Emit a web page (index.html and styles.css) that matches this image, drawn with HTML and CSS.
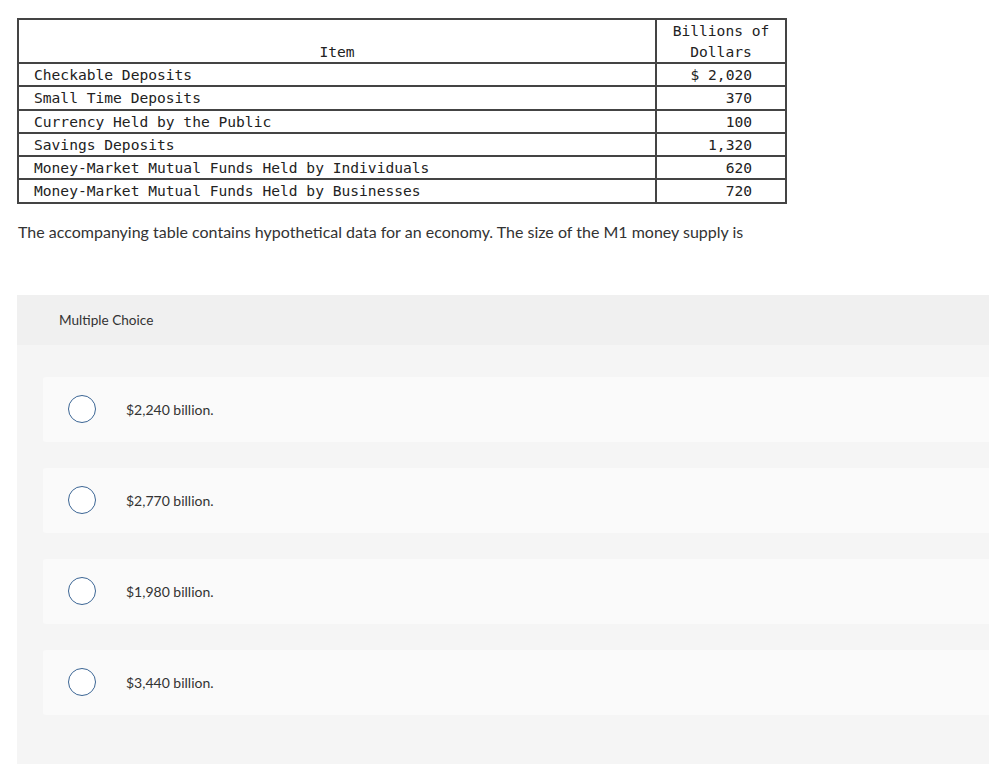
FILE: index.html
```html
<!DOCTYPE html>
<html>
<head>
<meta charset="utf-8">
<link rel="stylesheet" href="styles.css">
</head>
<body>
<div class="page">
  <table class="data">
    <thead>
      <tr>
        <th class="item-h">Item</th>
        <th class="val-h">Billions of<br>Dollars</th>
      </tr>
    </thead>
    <tbody>
      <tr><td class="item">Checkable Deposits</td><td class="val">$ 2,020</td></tr>
      <tr><td class="item">Small Time Deposits</td><td class="val">370</td></tr>
      <tr><td class="item">Currency Held by the Public</td><td class="val">100</td></tr>
      <tr><td class="item">Savings Deposits</td><td class="val">1,320</td></tr>
      <tr><td class="item">Money-Market Mutual Funds Held by Individuals</td><td class="val">620</td></tr>
      <tr><td class="item">Money-Market Mutual Funds Held by Businesses</td><td class="val">720</td></tr>
    </tbody>
  </table>
  <p class="question">The accompanying table contains hypothetical data for an economy. The size of the M1 money supply is</p>
  <section class="mc">
    <div class="mc-head">Multiple Choice</div>
    <div class="mc-list">
      <label class="opt"><span class="radio"></span><span class="opt-text">$2,240 billion.</span></label>
      <label class="opt"><span class="radio"></span><span class="opt-text">$2,770 billion.</span></label>
      <label class="opt"><span class="radio"></span><span class="opt-text">$1,980 billion.</span></label>
      <label class="opt"><span class="radio"></span><span class="opt-text">$3,440 billion.</span></label>
    </div>
  </section>
</div>
</body>
</html>
```

FILE: styles.css
```css
html, body {
  margin: 0;
  padding: 0;
  background: #ffffff;
}
.page {
  padding: 18px 0 0 17px;
}
.data {
  border-collapse: collapse;
  width: 770px;
  border: 2px solid #444444;
  font-family: "DejaVu Sans Mono", "Liberation Mono", monospace;
  font-size: 14.6px;
  color: #222222;
}
.data th, .data td {
  border: 2px solid #444444;
  font-weight: normal;
  line-height: 21px;
  padding: 0;
}
.data td {
  line-height: 21.3px;
}
.data th {
  vertical-align: bottom;
  text-align: center;
  padding-top: 0;
}
.item-h {
  width: 636px;
}
.data td.item {
  padding-left: 15px;
  text-align: left;
}
.data td.val {
  text-align: right;
  padding-right: 33px;
}
.question {
  margin: 18px 0 0 1px;
  font-family: Lato, "Open Sans", sans-serif;
  font-size: 16px;
  color: #333333;
  line-height: 20px;
}
.mc {
  margin-top: 53px;
  background: #f5f5f5;
  padding-bottom: 60px;
}
.mc-head {
  background: #f0f0f0;
  height: 50px;
  display: flex;
  align-items: center;
  padding-left: 42px;
  font-family: Lato, "Open Sans", sans-serif;
  font-size: 13.6px;
  color: #333333;
}
.mc-list {
  display: flex;
  flex-direction: column;
  gap: 26px;
  padding: 32px 0 0 26px;
}
.opt {
  display: flex;
  align-items: center;
  height: 65px;
  background: #fafafa;
  border-radius: 3px 0 0 3px;
  font-family: Lato, "Open Sans", sans-serif;
  font-size: 14px;
  color: #333333;
}
.radio {
  box-sizing: border-box;
  width: 28px;
  height: 28px;
  border: 1.6px solid #3b6594;
  border-radius: 50%;
  background: #ffffff;
  margin-left: 25px;
  margin-right: 30px;
  flex: none;
}
```
